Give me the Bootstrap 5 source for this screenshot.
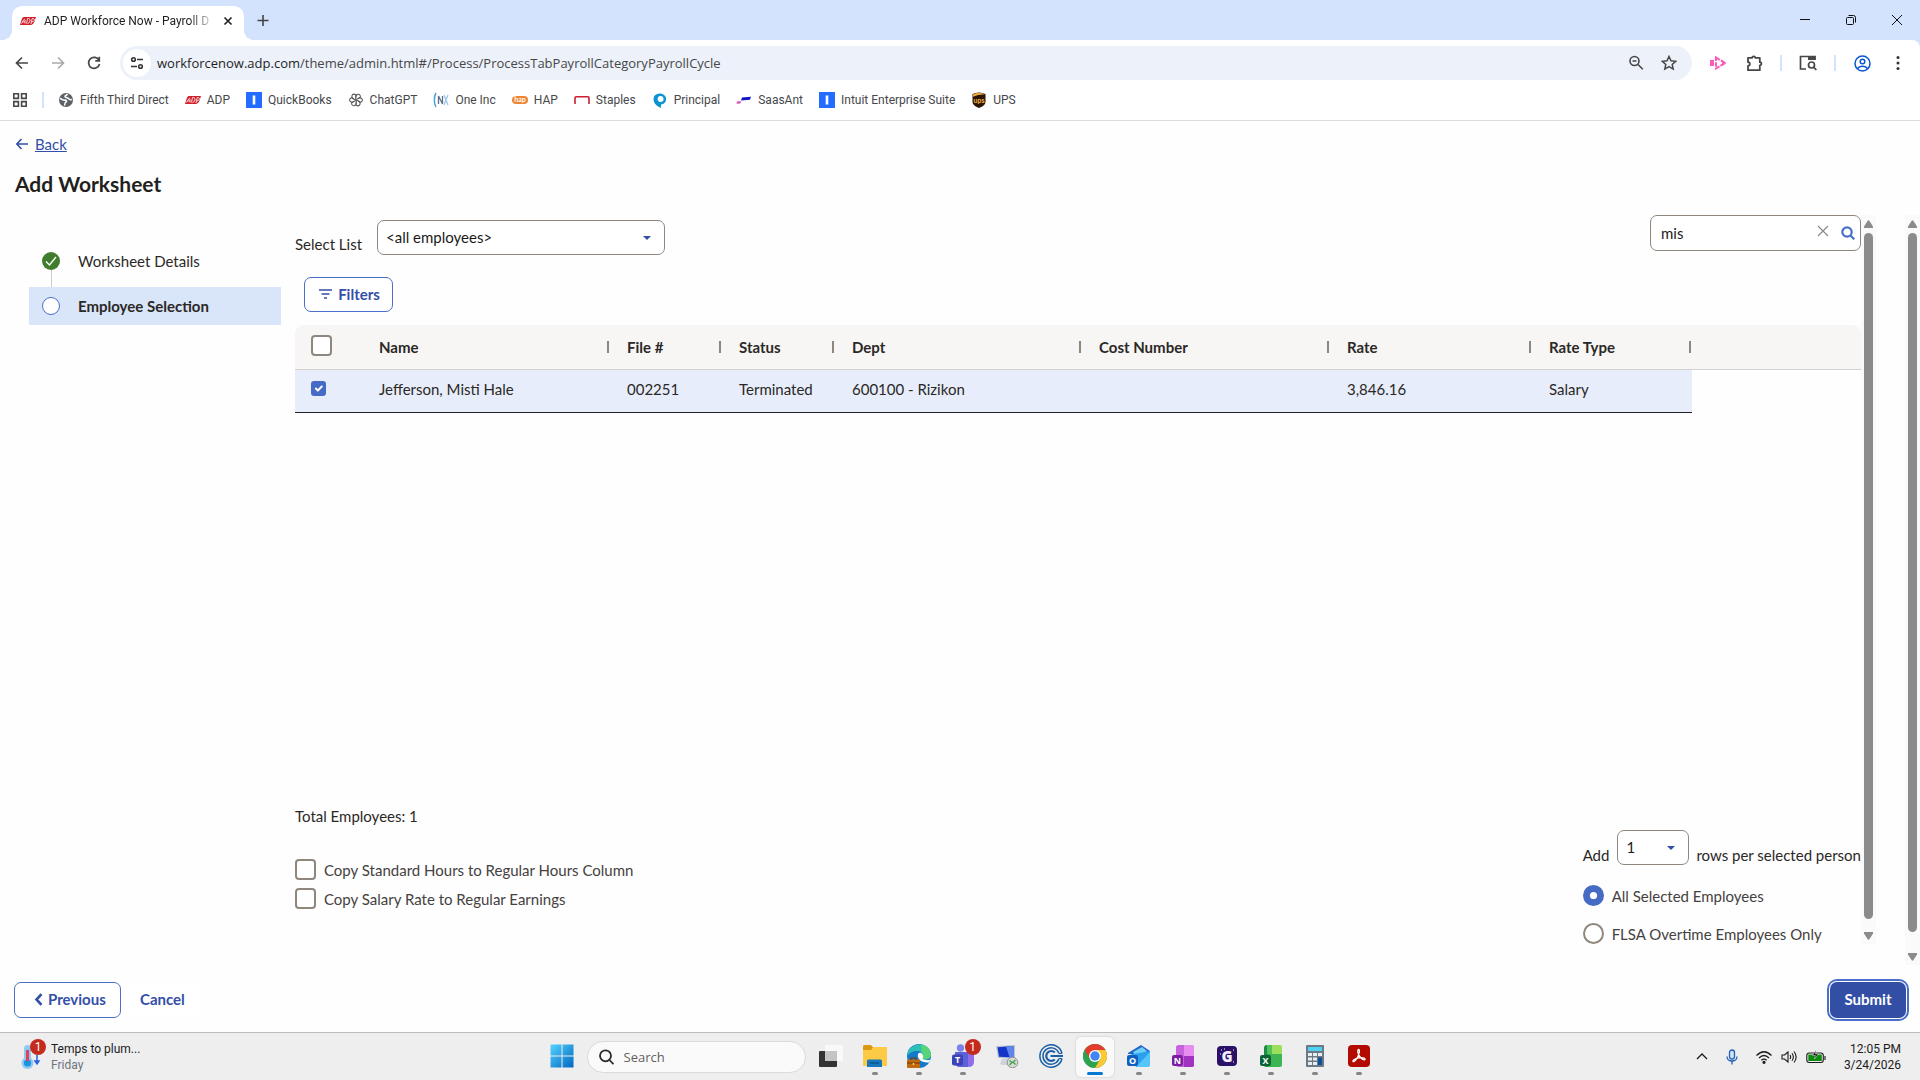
<!DOCTYPE html>
<html lang="en">
<head>
<meta charset="utf-8">
<meta name="viewport" content="width=device-width, initial-scale=1">
<title>ADP Workforce Now - Payroll Dashboard</title>
<link rel="stylesheet" href="https://cdn.jsdelivr.net/npm/bootstrap@5.3.0/dist/css/bootstrap.min.css">
<script src="https://cdn.jsdelivr.net/npm/bootstrap@5.3.0/dist/js/bootstrap.bundle.min.js"></script>
<style>
  :root { --blue: #334fa8; --accent: #4a6fc8; --edge: #8f877d; --ink: #2b2826; }
  body { font-family: Lato, "Liberation Sans", sans-serif; font-size: 15px; line-height: 20px; color: var(--ink); background: #fefefe; overflow: hidden; }
  button { background: none; border: 0; padding: 0; color: inherit; }
  svg { flex: none; display: block; }
  .os-ui { font-family: Roboto, "Open Sans", sans-serif; font-size: 12px; line-height: 16px; color: #46484b; }

  /* browser frame */
  .tab-strip { background: #d3e3fd; height: 40px; padding-left: 12px; }
  .page-tab { position: relative; background: #fff; width: 232px; height: 34px; border-radius: 10px 10px 0 0; padding: 0 9px 5px 8px; color: #1f1f1f; }
  .page-tab::before, .page-tab::after { content: ""; position: absolute; bottom: 0; width: 10px; height: 10px; }
  .page-tab::before { left: -10px; background: radial-gradient(circle at 0 0, transparent 10px, #fff 10px); }
  .page-tab::after { right: -10px; background: radial-gradient(circle at 100% 0, transparent 10px, #fff 10px); }
  .tab-title { width: 170px; white-space: nowrap; -webkit-mask-image: linear-gradient(90deg, #000 145px, transparent 172px); mask-image: linear-gradient(90deg, #000 145px, transparent 172px); }
  .new-tab { margin-left: 12px; }
  .win-btn { width: 46px; height: 40px; display: grid; place-items: center; color: #111; }
  .tool-wrap { background: #d3e3fd; }
  .tool-row { background: #fff; border-radius: 0 8px 0 0; padding: 6px 4px 6px 4px; }
  .tool-btn { width: 36px; height: 34px; display: grid; place-items: center; color: #474747; }
  .omnibox { background: #ecf1fa; height: 34px; border-radius: 17px; margin-left: 8px; padding-left: 3px; padding-right: 7px; }
  .omnibox .tool-btn { width: 33px; }
  .site-info { width: 28px; height: 28px; border-radius: 50%; background: #fff; display: grid; place-items: center; }
  .url-text { font: 13px/20px "Open Sans", sans-serif; color: #474747; margin-left: 6px; text-decoration: none; }
  .url-text b { font-weight: 400; color: #1f1f1f; }
  .v-rule { width: 2px; height: 16px; background: #d3e3fd; }
  .marks-row { background: #fff; border-bottom: 1px solid #dcdde0; padding: 4px 12px 10px; height: 35px; }
  .marks-row a { color: inherit; text-decoration: none; gap: 6px; }
  .marks-row .v-rule { margin: 0 -2px; }

  /* wizard page */
  .page-head { padding: 13px 16px 17px 15px; }
  .back-link { color: var(--blue); gap: 6px; text-decoration: none; }
  .back-link span { text-decoration: underline; }
  .page-title { font-size: 21px; line-height: 28px; font-weight: 700; color: #221f1d; margin: 16px 0 0; }
  .steps { width: 252px; margin: 27px 14px 0 29px; gap: 7px; }
  .step { height: 38px; padding-left: 13px; gap: 18px; color: inherit; text-decoration: none; }
  .step.current { background: #d9e5f8; font-weight: 700; }
  .step-dot { position: relative; width: 18px; height: 18px; border-radius: 50%; }
  .step-dot.done { background: #3f7d2c; }
  .step-dot.done::after { content: ""; position: absolute; left: 9px; top: 18px; width: 1px; height: 17px; background: #cfccc8; }
  .step-dot.todo { background: #fff; border: 1px solid var(--accent); }
  .field-box { border: 1px solid var(--edge); border-radius: 7px; background-color: #fff; color: #1c1a19; }
  .drop { appearance: none; font-size: 15px; line-height: 20px; height: 35px; padding: 6px 24px 8px 8px; background-repeat: no-repeat; background-position: right 13px center; background-size: 8px 4px; background-image: url("data:image/svg+xml,%3Csvg xmlns='http://www.w3.org/2000/svg' viewBox='0 0 8 4'%3E%3Cpath fill='%23334fa8' d='M0 0h8L4 4z'/%3E%3C/svg%3E"); }
  .drop-list { width: 288px; margin-left: 15px; }
  .drop-rows { width: 72px; margin: 0 7px 0 8px; }
  .list-row > div { margin-top: 5px; }
  .list-row label { padding-bottom: 1px; }
  .search-box { width: 211px; height: 36px; padding: 0 5px 0 10px; }
  .search-box input { border: 0; outline: 0; padding: 0; background: none; min-width: 0; color: #1c1a19; }
  .btn-line { --bs-btn-color: var(--blue); --bs-btn-border-color: var(--accent); --bs-btn-bg: #fff; --bs-btn-font-weight: 700; --bs-btn-font-size: 15px; --bs-btn-line-height: 20px; --bs-btn-border-radius: 7px; }
  .btn-filters { width: 89px; height: 35px; margin: 22px 0 0 9px; gap: 6px; padding-left: 14px; padding-bottom: 8px; }

  .emp-table { margin: 13px 0 0; width: 100%; table-layout: fixed; border-collapse: separate; border-spacing: 0; }
  .emp-table th { background: #f7f6f4; height: 45px; padding: 0 0 0 17px; border-bottom: 1px solid #d4d2cf; font-weight: 700; position: relative; }
  .emp-table th:first-child { border-radius: 9px 0 0 0; padding: 0 0 4px 16px; }
  .emp-table th:last-child { border-radius: 0 9px 0 0; }
  .emp-table th.split::after { content: ""; position: absolute; right: 1px; top: 16px; width: 2px; height: 12px; background: var(--edge); }
  .emp-table td { height: 43px; padding: 0 0 5px 17px; background: #e7edfa; border-bottom: 1px solid #222; }
  .emp-table td:first-child { padding-left: 16px; }
  .emp-table td.blank { background: none; border: 0; }
  .form-check-input.tick { width: 21px; height: 21px; border: 2px solid var(--edge); border-radius: 4px; margin: 0; flex: none; display: block; }
  .form-check-input.tick.small-tick { width: 15px; height: 15px; border-radius: 3px; }
  .form-check-input.pick { width: 21px; height: 21px; border: 2px solid var(--edge); margin: 0; flex: none; }
  .form-check-input.tick:checked, .form-check-input.pick:checked { background-color: #466bc4; border-color: #466bc4; }
  .form-check-input.tick:checked { background-size: 13px; background-position: center; }
  .form-check-input.pick:checked { background-image: url("data:image/svg+xml,%3Csvg xmlns='http://www.w3.org/2000/svg' viewBox='-4 -4 8 8'%3E%3Ccircle r='1.7' fill='%23fff'/%3E%3C/svg%3E"); }
  .copy-opts { padding-top: 29px; gap: 8px; }
  .copy-opts .d-flex, .scope-opt { gap: 8px; height: 21px; color: #45413e; }
  .scope-opt + .scope-opt { margin-top: 17px; }

  .scroller { flex: none; width: 15px; background: #fafafa; padding: 5px 0 4px; gap: 5px; color: #8b8b8b; }
  .scroller i { width: 9px; border-radius: 5px; background: currentColor; }
  .inner-area { margin-bottom: 21px; margin-right: 29px; }
  .page-foot { padding: 17px 14px 14px; }
  .page-foot .btn { height: 36px; padding: 0 14px 2px; }
  .page-foot .btn-prev { width: 107px; padding-left: 19px; gap: 5px; }
  .btn-cancel { margin-left: 5px; }
  .btn-send { --bs-btn-color: #fff; --bs-btn-bg: #334fa5; --bs-btn-font-weight: 700; --bs-btn-font-size: 15px; --bs-btn-border-radius: 7px; width: 76px; border: 0; white-space: nowrap; box-shadow: 0 0 0 1px #fff, 0 0 0 3px var(--accent); }

  /* desktop bar */
  .desk-bar { background: #eee; border-top: 1px solid #bcbcbc; height: 48px; }
  .weather, .tray { flex: 1 1 0; }
  .app { position: relative; width: 44px; height: 47px; display: grid; place-items: center; padding-bottom: 1px; }
  .app.open::after { content: ""; position: absolute; left: 19px; bottom: 5px; width: 6px; height: 3px; border-radius: 2px; background: #858585; }
  .app.active::before { content: ""; position: absolute; left: 3px; top: 4px; width: 38px; height: 40px; border-radius: 5px; background: #f9f9f9; box-shadow: 0 0 2px #bbb; }
  .app.active::after { left: 14px; width: 16px; background: #0078d4; }
  .app svg { position: relative; }
  .count { position: absolute; width: 16px; height: 16px; border-radius: 50%; background: #c42b1c; color: #fff; text-align: center; }
  .app .count { right: 4px; top: 6px; }
  .weather { padding-left: 19px; gap: 8px; color: #1b1b1b; }
  .weather .count { left: 11px; top: -5px; }
  .find-pill { width: 219px; height: 32px; margin: 0 3px; padding: 0 11px; border-radius: 16px; background: #fafafa; border: 1px solid #dadada; gap: 10px; }
  .find-pill input { border: 0; outline: 0; background: none; padding: 0; min-width: 0; font: 13px/18px "Open Sans", sans-serif; }
  .find-pill input::placeholder { color: #616161; }
  .tray { padding-right: 19px; gap: 9px; color: #1b1b1b; }
  .tray svg.far { margin-right: 9px; }
</style>
</head>
<body class="d-flex flex-column min-vh-100">

<header class="os-ui">
  <div class="tab-strip d-flex align-items-end">
    <div class="page-tab d-flex align-items-center">
      <svg width="16" height="16" viewBox="0 0 16 16"><use href="#adp"/></svg>
      <span class="tab-title overflow-hidden ms-2">ADP Workforce Now - Payroll D</span>
      <button class="ms-auto" aria-label="Close tab"><svg width="14" height="14" viewBox="0 0 14 14" stroke="#1f1f1f" stroke-width="1.600"><path d="M3.500 3.500l7 7M10.500 3.500l-7 7"/></svg></button>
    </div>
    <button class="new-tab align-self-center" aria-label="New tab"><svg width="14" height="14" viewBox="0 0 14 14" stroke="#444" stroke-width="1.600"><path d="M7 2v11M1.500 7.500h11"/></svg></button>
    <div class="d-flex ms-auto">
      <button class="win-btn" aria-label="Minimize"><svg width="12" height="12" viewBox="0 0 12 12" stroke="currentColor"><path d="M1 5.500h10"/></svg></button>
      <button class="win-btn" aria-label="Restore"><svg width="12" height="12" viewBox="0 0 12 12" fill="none" stroke="currentColor"><rect x="1.500" y="3.500" width="7" height="7" rx="1"/><path d="M3.500 1.500h5a2 2 0 0 1 2 2v5"/></svg></button>
      <button class="win-btn" aria-label="Close"><svg width="12" height="12" viewBox="0 0 12 12" stroke="currentColor"><path d="M1 1l10 10M11 1L1 11"/></svg></button>
    </div>
  </div>
  <div class="tool-wrap">
    <div class="tool-row d-flex align-items-center">
      <button class="tool-btn" aria-label="Back"><svg width="14" height="14" viewBox="0 0 14 14" fill="none" stroke="currentColor" stroke-width="1.700"><path d="M13 7H2M7 1.500L1.500 7 7 12.500"/></svg></button>
      <button class="tool-btn" aria-label="Forward"><svg width="14" height="14" viewBox="0 0 14 14" fill="none" stroke="#ababab" stroke-width="1.700"><path d="M1 7h11M7 1.500L12.500 7 7 12.500"/></svg></button>
      <button class="tool-btn" aria-label="Reload"><svg width="14" height="14" viewBox="0 0 14 14" fill="none" stroke="currentColor" stroke-width="1.700"><path d="M12 4.300A5.500 5.500 0 1 0 12.500 8M12.300.8v4H8.300"/></svg></button>
      <div class="omnibox flex-grow-1 d-flex align-items-center">
        <button class="site-info" aria-label="Site information"><svg width="14" height="14" viewBox="0 0 14 14" fill="none" stroke="#333" stroke-width="1.600"><circle cx="3.500" cy="3.500" r="1.800"/><path d="M7 3.500h6M1 10.500h6"/><circle cx="10.500" cy="10.500" r="1.800"/></svg></button>
        <a class="url-text" href="#"><b>workforcenow.adp.com</b>/theme/admin.html#/Process/ProcessTabPayrollCategoryPayrollCycle</a>
        <button class="tool-btn ms-auto" aria-label="Zoom"><svg width="16" height="16" viewBox="0 0 16 16" fill="none" stroke="currentColor" stroke-width="1.600"><circle cx="6.500" cy="6" r="4.500"/><path d="M10 9.500l4.800 4.800M4.500 6h4"/></svg></button>
        <button class="tool-btn" aria-label="Bookmark"><svg width="16" height="16" viewBox="0 0 16 16" fill="none" stroke="currentColor" stroke-width="1.500"><path d="M8 1.500l2 4.300 4.700.5-3.500 3.100 1 4.700L8 11.700l-4.200 2.400 1-4.700L1.300 6.300 6 5.800z"/></svg></button>
      </div>
      <button class="tool-btn ms-2" aria-label="Extension"><svg width="17" height="14" viewBox="0 0 17 14" fill="#fb5cb9"><path d="M0 4h4v6H0z"/><path d="M6 1.500l9 5.500-9 5.500z" fill="none" stroke="#fb5cb9" stroke-width="2" stroke-dasharray="4.500 1.200"/><path d="M12 4l4.500 3L12 10z"/></svg></button>
      <button class="tool-btn" aria-label="Extensions"><svg width="17" height="17" viewBox="0 0 17 17" fill="none" stroke="currentColor" stroke-width="1.800"><path d="M2 2.800h4.200a1.500 1.500 0 0 1 3 0h4.600v4.400a1.600 1.600 0 0 1 0 3.200v4.800H2v-4.400c2.400 0 2.400-3.600 0-3.600z" stroke-linejoin="round"/></svg></button>
      <span class="v-rule ms-2 me-2"></span>
      <button class="tool-btn" aria-label="Search tabs"><svg width="18" height="16" viewBox="0 0 18 16" fill="none" stroke="currentColor" stroke-width="1.700"><path d="M7 14H1.500V1.500H16V5"/><path d="M9 1.500h7.500v3.500H9z" fill="currentColor" stroke="none"/><circle cx="12.500" cy="10" r="3"/><path d="M14.600 12.200l2.800 2.800"/></svg></button>
      <span class="v-rule ms-2 me-2"></span>
      <button class="tool-btn" aria-label="Profile"><svg width="17" height="17" viewBox="0 0 17 17" fill="none" stroke="#0b57d0" stroke-width="1.500"><circle cx="8.500" cy="8.500" r="7.500"/><circle cx="8.500" cy="6.500" r="2.300"/><path d="M3.500 13.700c2-3.200 8-3.200 10 0"/></svg></button>
      <button class="tool-btn" aria-label="Menu"><svg width="4" height="16" viewBox="0 0 4 16" fill="#333"><circle cx="2" cy="2.500" r="1.500"/><circle cx="2" cy="8" r="1.500"/><circle cx="2" cy="13.500" r="1.500"/></svg></button>
    </div>
  </div>
  <nav class="marks-row d-flex align-items-center gap-3">
    <button aria-label="Apps"><svg width="16" height="16" viewBox="0 0 16 16" fill="none" stroke="#474747" stroke-width="1.600"><path d="M1.800 1.800h4.600v4.600H1.800zM9.600 1.800h4.600v4.600H9.600zM1.800 9.600h4.600v4.600H1.800zM9.600 9.600h4.600v4.600H9.600z"/></svg></button>
    <span class="v-rule"></span>
    <a href="#" class="d-flex align-items-center"><svg width="16" height="16" viewBox="0 0 16 16"><circle cx="8" cy="8" r="7" fill="#5f6368"/><path d="M2 6.500c2 .5 3 2 5 1.600 2 0 2 1.700.5 2.200-.8.500-.4 1.600-1 3.200M9.500 2c-.8 1.800-2.600 1.300-2.500 2.600.3 1.500 3 .6 3.600 2 .4 1.100 1.500 1.300 3.300 1" fill="none" stroke="#fff" stroke-width="1.500"/></svg>Fifth Third Direct</a>
    <a href="#" class="d-flex align-items-center"><svg width="16" height="16" viewBox="0 0 16 16"><use href="#adp"/></svg>ADP</a>
    <a href="#" class="d-flex align-items-center"><svg width="16" height="16" viewBox="0 0 16 16"><use href="#intuit"/></svg>QuickBooks</a>
    <a href="#" class="d-flex align-items-center"><svg width="16" height="16" viewBox="-1 -1 18 18" fill="none" stroke="#555" stroke-width="1.200"><g id="petal"><path d="M8 5.200V3.800a2.500 2.500 0 0 1 4.500-1.200 2.500 2.500 0 0 1 .3 2.300L8 7.600"/></g><use href="#petal" transform="rotate(60 8 8)"/><use href="#petal" transform="rotate(120 8 8)"/><use href="#petal" transform="rotate(180 8 8)"/><use href="#petal" transform="rotate(240 8 8)"/><use href="#petal" transform="rotate(300 8 8)"/></svg>ChatGPT</a>
    <a href="#" class="d-flex align-items-center"><svg width="16" height="16" viewBox="0 0 16 16" fill="none"><path d="M3 1C.8 4 .8 12 3 15" stroke="#4aa3d8" stroke-width="1.500"/><path d="M5.500 12V4l4 8V4" stroke="#5c6f86" stroke-width="1.300"/><path d="M11 3l4 10M15 3l-4 10" stroke="#9ec8e6" stroke-width="1.300"/></svg>One Inc</a>
    <a href="#" class="d-flex align-items-center"><svg width="16" height="16" viewBox="0 0 16 16"><rect y="4" width="16" height="8" rx="4" fill="#ef8432"/><text x="8" y="10.300" font-size="7" font-weight="700" fill="#fff" text-anchor="middle" font-family="Lato">hap</text></svg>HAP</a>
    <a href="#" class="d-flex align-items-center"><svg width="16" height="16" viewBox="0 0 16 16" fill="none" stroke="#cc1f2f" stroke-width="1.600"><path d="M1 12V6q0-1.200 1.200-1.200h11.600Q15 4.800 15 6v6"/></svg>Staples</a>
    <a href="#" class="d-flex align-items-center"><svg width="16" height="16" viewBox="0 0 16 16"><path d="M9 16V12.500C13 12 14.500 9 14 6 13 .5 5 0 2.300 4 .3 8 2 13 9 16zM8.500 4a3 3 0 1 1-2.500 4.500C5 6 6.500 4 8.500 4z" fill="#0d93cf" fill-rule="evenodd"/></svg>Principal</a>
    <a href="#" class="d-flex align-items-center"><svg width="16" height="16" viewBox="0 0 16 16"><path d="M6 5.500l9-.8-1 3-9 .8z" fill="#1212c9"/><path d="M1 9.500l4-.5-.7 2.500-3.800.3z" fill="#e04fb5"/></svg>SaasAnt</a>
    <a href="#" class="d-flex align-items-center"><svg width="16" height="16" viewBox="0 0 16 16"><use href="#intuit"/></svg>Intuit Enterprise Suite</a>
    <a href="#" class="d-flex align-items-center"><svg width="16" height="16" viewBox="0 0 16 16"><path d="M1.500 2Q8-1.200 14.500 2v8q0 3.500-6.500 6Q1.500 13.500 1.500 10z" fill="#2d1506"/><path d="M2 2.500Q8-.3 14 2.500 8 2 2 4.800z" fill="#f0b040"/><text x="8" y="11" font-size="7" font-weight="700" fill="#f5b93e" text-anchor="middle" font-family="Lato">ups</text></svg>UPS</a>
  </nav>
</header>

<main class="flex-grow-1 d-flex flex-column">
  <div class="page-head">
    <a href="#" class="back-link d-flex align-items-center"><svg width="14" height="14" viewBox="0 0 14 14" fill="none" stroke="currentColor" stroke-width="1.600"><path d="M13 7H2M6.500 2L1.800 7l4.700 5"/></svg><span>Back</span></a>
    <h1 class="page-title">Add Worksheet</h1>
  </div>

  <div class="flex-grow-1 d-flex">
    <div class="inner-area flex-grow-1 d-flex">
      <nav class="steps d-flex flex-column flex-shrink-0">
        <a href="#" class="step d-flex align-items-center"><span class="step-dot done"><svg width="18" height="18" viewBox="0 0 18 18" fill="none" stroke="#fff" stroke-width="1.400"><path d="M4 9.500l3.500 3.500 6.500-8"/></svg></span>Worksheet Details</a>
        <a href="#" class="step current d-flex align-items-center"><span class="step-dot todo"></span>Employee Selection</a>
      </nav>

      <section class="flex-grow-1 d-flex flex-column">
        <div class="list-row d-flex justify-content-between align-items-start">
          <div class="d-flex align-items-end">
            <label for="emp-list">Select List</label>
            <select id="emp-list" class="field-box drop drop-list"><option>&lt;all employees&gt;</option></select>
          </div>
          <form class="search-box field-box d-flex align-items-center" role="search">
            <input class="flex-grow-1" type="text" value="mis" aria-label="Search employees">
            <button type="button" class="me-2 pe-1 mb-1" aria-label="Clear"><svg width="12" height="12" viewBox="0 0 12 12" stroke="#8a8a8a" stroke-width="1.200"><path d="M1 1l10 10M11 1L1 11"/></svg></button>
            <button type="button" aria-label="Search"><svg width="14" height="14" viewBox="0 0 14 14" fill="none" stroke="#4a6fc8" stroke-width="2.200"><circle cx="6" cy="6" r="4.700"/><path d="M9.500 9.500l3.800 3.800"/></svg></button>
          </form>
        </div>
        <button class="btn btn-line btn-filters d-flex align-items-center justify-content-center"><svg width="13" height="10" viewBox="0 0 13 10" stroke="currentColor" stroke-width="1.500"><path d="M0 1h13M2.500 5h8M5 9h3"/></svg>Filters</button>

        <table class="emp-table">
          <colgroup><col width="67"><col width="248"><col width="112"><col width="113"><col width="247"><col width="248"><col width="202"><col width="160"><col></colgroup>
          <thead><tr>
            <th><input type="checkbox" class="form-check-input tick" aria-label="Select all"></th>
            <th class="split">Name</th><th class="split">File #</th><th class="split">Status</th><th class="split">Dept</th><th class="split">Cost Number</th><th class="split">Rate</th><th class="split">Rate Type</th><th></th>
          </tr></thead>
          <tbody><tr>
            <td><input type="checkbox" class="form-check-input tick small-tick" checked aria-label="Select Jefferson, Misti Hale"></td>
            <td>Jefferson, Misti Hale</td><td>002251</td><td>Terminated</td><td>600100 - Rizikon</td><td></td><td>3,846.16</td><td>Salary</td><td class="blank"></td>
          </tr></tbody>
        </table>

        <div class="mt-auto">Total Employees: 1</div>
        <div class="d-flex justify-content-between mt-1">
          <div class="copy-opts d-flex flex-column">
            <div class="d-flex align-items-center"><input type="checkbox" id="copy-hours" class="form-check-input tick"><label for="copy-hours">Copy Standard Hours to Regular Hours Column</label></div>
            <div class="d-flex align-items-center"><input type="checkbox" id="copy-salary" class="form-check-input tick"><label for="copy-salary">Copy Salary Rate to Regular Earnings</label></div>
          </div>
          <div>
            <div class="d-flex align-items-end mb-3 pb-1">
              <label for="row-count">Add</label>
              <select id="row-count" class="field-box drop drop-rows"><option>1</option></select>
              <span>rows per selected person</span>
            </div>
            <div class="scope-opt d-flex align-items-center"><input type="radio" name="scope" id="scope-all" class="form-check-input pick" checked><label for="scope-all">All Selected Employees</label></div>
            <div class="scope-opt d-flex align-items-center"><input type="radio" name="scope" id="scope-flsa" class="form-check-input pick"><label for="scope-flsa">FLSA Overtime Employees Only</label></div>
          </div>
        </div>
      </section>
      <div class="scroller d-flex flex-column align-items-center"><svg width="9" height="8" viewBox="0 0 9 8" fill="currentColor"><path d="M3.500 1q1-1.500 2 0L9 6.500V8H0V6.500z"/></svg><i class="flex-grow-1 mb-2"></i><svg width="9" height="8" viewBox="0 0 9 8" fill="currentColor"><path d="M3.500 7q1 1.500 2 0L9 1.500V0H0v1.500z"/></svg></div>
    </div>
    <div class="scroller d-flex flex-column align-items-center"><svg width="9" height="8" viewBox="0 0 9 8" fill="currentColor"><path d="M3.500 1q1-1.500 2 0L9 6.500V8H0V6.500z"/></svg><i class="flex-grow-1 mb-3"></i><svg width="9" height="8" viewBox="0 0 9 8" fill="currentColor"><path d="M3.500 7q1 1.500 2 0L9 1.500V0H0v1.500z"/></svg></div>
  </div>

  <div class="page-foot d-flex align-items-center">
    <button class="btn btn-line btn-prev d-flex align-items-center"><svg width="9" height="13" viewBox="0 0 9 13" fill="none" stroke="currentColor" stroke-width="2.600"><path d="M7.500 1.200L2.500 6.500l5 5.300"/></svg>Previous</button>
    <button class="btn btn-line btn-cancel border-0">Cancel</button>
    <button class="btn btn-send ms-auto">Submit</button>
  </div>
</main>

<footer class="desk-bar os-ui d-flex align-items-center">
  <div class="weather d-flex align-items-center">
    <div class="position-relative"><svg width="24" height="26" viewBox="0 0 24 26"><rect x="5" y="1" width="7" height="18" rx="3.500" fill="#8ec9f2"/><circle cx="8.500" cy="19" r="6" fill="#8ec9f2"/><circle cx="8.500" cy="19" r="3.600" fill="#1a93e0"/><path d="M8.500 17V6" stroke="#e0405c" stroke-width="3"/><path d="M18 11v8M16 17l2 3 2-3z" stroke="#2e5fe0" stroke-width="1.500" fill="#2e5fe0"/></svg><span class="count">1</span></div>
    <div>Temps to plum...<br><span class="text-secondary">Friday</span></div>
  </div>
  <div class="d-flex align-items-center">
    <button class="app" aria-label="Start"><svg width="24" height="24" viewBox="0 0 24 24"><defs><linearGradient id="win" x2="1" y2="1"><stop stop-color="#54d3ff"/><stop offset="1" stop-color="#0067c0"/></linearGradient></defs><path d="M.5.500H11.500v11H.5zM12.500.5h11v11h-11zM.5 12.500h11v11H.5zM12.500 12.500h11v11h-11z" fill="url(#win)"/></svg></button>
    <div class="find-pill d-flex align-items-center"><svg width="15" height="16" viewBox="0 0 15 16" fill="none" stroke="#2a2a2a" stroke-width="1.800"><circle cx="6.500" cy="6.800" r="5.500"/><path d="M10.500 11l4 4.200"/></svg><input class="flex-grow-1" type="text" placeholder="Search" aria-label="Search"></div>
    <button class="app" aria-label="Task view"><svg width="24" height="24" viewBox="0 0 24 24"><rect y="7" width="18" height="16" rx="1" fill="#333"/><rect x="6" y="1" width="18" height="16" rx="1" fill="#fafafa" opacity=".85"/><path d="M6 7h12v10H6z" fill="#c4c4c4"/></svg></button>
    <button class="app open" aria-label="File Explorer"><svg width="24" height="24" viewBox="0 0 24 24"><path d="M0 2.500q0-1.500 1.500-1.500H8l2.500 3H22v6H0z" fill="#d99a12"/><path d="M0 6h8l2.500-3H24v19H0z" fill="#fdca45"/><path d="M4 23v-6q0-1.500 1.500-1.500h12q1.500 0 1.500 1.500v6z" fill="#1778be"/><path d="M7 19h9" stroke="#0b4f8a" stroke-width="1.300"/></svg></button>
    <button class="app open" aria-label="Edge"><svg width="24" height="24" viewBox="0 0 24 24"><circle cx="12" cy="12" r="12" fill="#1479c9"/><path d="M1 8C5-2.500 21-2 23.800 9c.8 6-6 8-8.800 5.500 3-4-1-8-6-7.500C5 7 2 9.500.3 12z" fill="#2bbfb8"/><path d="M14 .500c6 1 10 5 10 10 0 5-6 6-9 4 2-3 1-5-.5-6.500z" fill="#63d968" opacity=".8"/><path d="M11 10c-1 5 3 9 11 8.500l1.500-3q-4 1.500-8-.5 1.500-3-.5-5.500-2.500-1.500-4 .5z" fill="#fff"/><rect y="15.500" width="13" height="8.500" rx="1" fill="#c0690d"/><path d="M4 15.500v-1.500h5v1.500M0 19h13" stroke="#6e3706" stroke-width="1.200" fill="none"/><circle cx="6.500" cy="20" r="1" fill="#ffd36b"/></svg></button>
    <button class="app open" aria-label="Teams"><svg width="24" height="24" viewBox="0 0 24 24"><circle cx="9.500" cy="4" r="3.700" fill="#7b83eb"/><path d="M12 8h9q2 0 2 2v8q0 5-6 5h-4z" fill="#8f6ee8"/><path d="M4 8h11q2 0 2 2v13H9q-5 0-5-5z" fill="#5b62d6"/><rect x="1" y="10.500" width="11" height="11" rx="2" fill="#3b41b8"/><text x="6.500" y="19.300" font-size="9" font-weight="700" fill="#fff" text-anchor="middle" font-family="Open Sans">T</text></svg><span class="count">1</span></button>
    <button class="app" aria-label="Remote Desktop"><svg width="24" height="24" viewBox="0 0 24 24"><path d="M1 2l19-1v14L3 14z" fill="#b9c4d6"/><path d="M2.500 3.200L18.500 2v11.500L4 12.800z" fill="#1535c9"/><path d="M11 2.600l7.500-.6v11.500l-4-.2z" fill="#5f86ef"/><path d="M7 15h7l1 4 3 2H7l-2-1z" fill="#cdd3da"/><circle cx="17.500" cy="18.500" r="5.300" fill="#d8dcd9" stroke="#8b918e"/><path d="M14.500 16.500l2.500 2-2.500 2.500M20.500 16L18 18l2.500 2.500" stroke="#3fa047" stroke-width="1.300" fill="none"/></svg></button>
    <button class="app" aria-label="C"><svg width="24" height="24" viewBox="0 0 24 24" fill="none" stroke="#1a5ea8"><path d="M23 9.500A11.200 11.200 0 1 0 23 14.500" stroke-width="1.500"/><path d="M19.800 9A8.200 8.200 0 1 0 19.800 15" stroke-width="1.500"/><path d="M19.500 9.500H23M19.500 14.500H23" stroke-width="1.200"/><path d="M15.800 8.500a5 5 0 1 0 0 7" stroke-width="2.200"/><path d="M11.500 12H24" stroke-width="2"/></svg></button>
    <button class="app open active" aria-label="Chrome"><svg width="24" height="24" viewBox="0 0 24 24"><circle cx="12" cy="12" r="12" fill="#2fa24f"/><path d="M12 12L1.600 6A12 12 0 0 1 22.400 6z" fill="#e33b2e"/><path d="M12 6h10.400A12 12 0 0 1 12 24l5.200-9z" fill="#fcc934"/><path d="M1.600 6l5.200 9L12 12V6z" fill="#e33b2e"/><path d="M1.600 6l5.200 9 5.200 3-2 5.800A12 12 0 0 1 1.600 6z" fill="#2fa24f"/><circle cx="12" cy="12" r="6" fill="#fff"/><circle cx="12" cy="12" r="4.700" fill="#4285f4"/></svg></button>
    <button class="app open" aria-label="Outlook"><svg width="24" height="24" viewBox="0 0 24 24"><path d="M1 9L14 1l9 6v3H1z" fill="#1f64c9"/><path d="M6 8l9-5 5 4-10 7z" fill="#6fd0f7"/><path d="M4 10h3l16-3v13q0 3-3 3H9z" fill="#2aa0ee"/><path d="M23 8v12q0 3-3 3H9z" fill="#56c5f8"/><rect y="11" width="11" height="11" rx="2" fill="#0f5fbf"/><text x="5.500" y="19.800" font-size="9" font-weight="700" fill="#fff" text-anchor="middle" font-family="Open Sans">O</text></svg></button>
    <button class="app open" aria-label="OneNote"><svg width="24" height="24" viewBox="0 0 24 24"><rect x="5" y="1" width="18" height="22" rx="2.500" fill="#c763dc"/><path d="M13 1h8q2 0 2 2v9H13z" fill="#e88df0"/><path d="M13 12h10v9q0 2-2 2h-8z" fill="#a033c0"/><rect x="1" y="11" width="11" height="11" rx="2" fill="#7a1fa0"/><text x="6.500" y="19.800" font-size="9" font-weight="700" fill="#fff" text-anchor="middle" font-family="Open Sans">N</text></svg></button>
    <button class="app open" aria-label="G"><svg width="22" height="22" viewBox="0 0 22 22"><rect x="1" y="1" width="20" height="20" rx="4" fill="#2a1066"/><text x="11" y="16.500" font-size="15" font-weight="800" fill="#f4efff" text-anchor="middle" font-family="Open Sans">G</text><path d="M5 5h1M17 5h1M4 9h1M17 17h1M8 4h1" stroke="#fff"/></svg></button>
    <button class="app open" aria-label="Excel"><svg width="24" height="24" viewBox="0 0 24 24"><path d="M5 4q0-3 3-3h5v22H7q-2 0-2-2z" fill="#1e8a45"/><path d="M13 1h8q2 0 2 2v7H13z" fill="#9ade5b"/><path d="M9 10h14v11q0 2-2 2H9z" fill="#3db552"/><path d="M13 10V1H8v9z" fill="#52c25a"/><rect x="1" y="11" width="11" height="11" rx="2" fill="#0d6335"/><text x="6.500" y="19.800" font-size="9" font-weight="700" fill="#fff" text-anchor="middle" font-family="Open Sans">X</text></svg></button>
    <button class="app open" aria-label="Calculator"><svg width="20" height="24" viewBox="0 0 20 24"><rect x="1" y="1" width="18" height="22" rx="1" fill="#6c7a86"/><path d="M3 3h14v4H3z" fill="#4fd0f5"/><path d="M3 9h4v3H3zM8 9h4v3H8zM13 9h4v3h-4zM3 13.500h4v3H3zM8 13.500h4v3H8zM3 18h4v3H3zM8 18h4v3H8z" fill="#e8edf1"/><path d="M13 13.500h4V21h-4z" fill="#0f4f96"/></svg></button>
    <button class="app open" aria-label="Acrobat"><svg width="24" height="24" viewBox="0 0 24 24"><rect x="1" y="1" width="22" height="22" rx="4" fill="#b30b00"/><path d="M11.500 5.500c1.800 0 .8 5-2 9.500-1.300 2-3 3.300-3.500 2.500-.6-1.500 4.500-4 9-3.800 3 0 3.800 1.700 2.500 2.100-1.800.5-6.500-3.800-6.800-8.300 0-1.300.3-2 .8-2z" fill="none" stroke="#fff" stroke-width="1.300"/></svg></button>
  </div>
  <div class="tray d-flex align-items-center justify-content-end">
    <svg width="12" height="7" viewBox="0 0 12 7" fill="none" stroke="currentColor" stroke-width="1.300" class="far"><path d="M1 6l5-5 5 5"/></svg>
    <svg width="12" height="16" viewBox="0 0 12 16" fill="none" stroke="#2160b4" stroke-width="1.300" class="far"><rect x="3.500" y="1" width="5" height="9" rx="2.500" fill="#cfe3f7"/><path d="M1 7.500c0 6 10 6 10 0M6 12v3.500"/></svg>
    <svg width="16" height="14" viewBox="1 0 16 14" fill="none" stroke="currentColor" stroke-width="1.200"><path d="M1.500 5.500q7.500-7.500 15 0M4 8q5-5 10 0M6.300 10.300q2.700-2.500 5.400 0"/><circle cx="9" cy="12.300" r="1" fill="currentColor"/></svg>
    <svg width="16" height="14" viewBox="0 0 16 14" fill="none" stroke="currentColor" stroke-width="1.100"><path d="M1 5h2.500L7 2v10L3.500 9H1zM9 5q1.300 2 0 4M11 3.200q2.700 3.800 0 7.600M13 1.500q4.300 5.500 0 11"/></svg>
    <svg width="20" height="14" viewBox="0 0 20 14" fill="none" stroke="currentColor" stroke-width="1.100" class="far"><rect x=".8" y="3" width="16.500" height="9.500" rx="2.500"/><rect x="2.300" y="4.500" width="13.500" height="6.500" fill="#0f8a10" stroke="none"/><path d="M19 6v4"/><path d="M10 0L6.500 5.500h3L8.500 9l4-5h-3z" fill="#111" stroke="#eee" stroke-width=".5"/></svg>
    <div class="text-end">12:05 PM<br>3/24/2026</div>
  </div>
</footer>

<svg width="0" height="0" class="position-absolute" aria-hidden="true">
  <symbol id="adp" viewBox="0 0 16 16"><path d="M3.500 4H16l-1.500 4.500Q13.800 11 11 12H0l1.500-5Q2.200 4.500 3.500 4z" fill="#d0202b"/><path d="M1.500 10.500l2.200-3.700q.6-1 1.300 0v3.700M2.500 9H5M6.500 10.500l1-5h1q2 .3 1.500 2.500T7.500 10.500M11 11l1.200-5.500h1q1.700.5 1 2t-2.500 1.300" stroke="#fff" stroke-width=".8" fill="none"/></symbol>
  <symbol id="intuit" viewBox="0 0 16 16"><path d="M0 0h16v16H0z" fill="#236cff"/><path d="M6.700 3.500h2.600v9H6.700z" fill="#fff"/></symbol>
</svg>
</body>
</html>
